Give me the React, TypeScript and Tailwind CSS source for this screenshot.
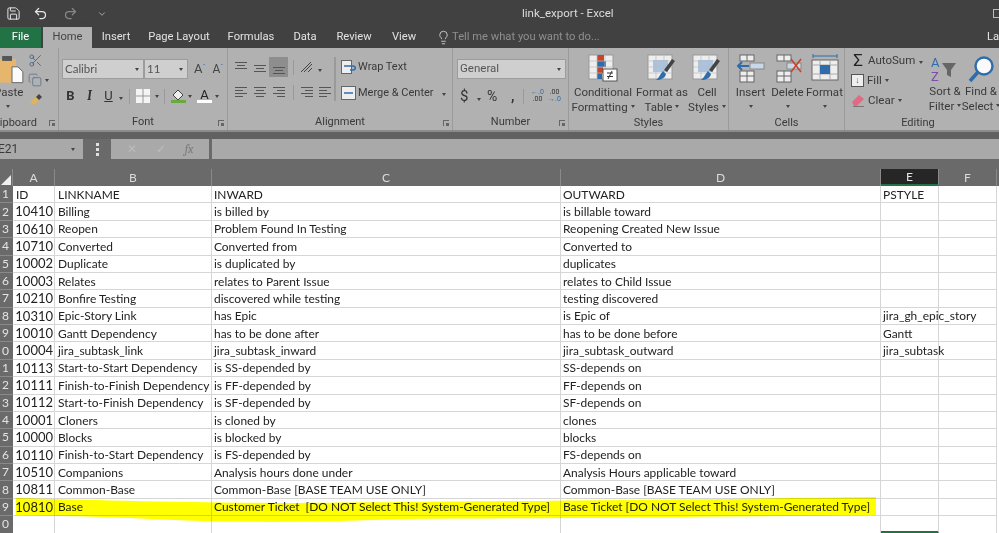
import type { ReactNode } from 'react';
import {
  ChevronDown,
  Copy,
  Lightbulb,
  Save,
  Scissors,
  Undo2,
  Redo2,
} from 'lucide-react';

const rows: [string, string, string, string, string][] = [
  ['10410', 'Billing', 'is billed by', 'is billable toward', ''],
  ['10610', 'Reopen', 'Problem Found In Testing', 'Reopening Created New Issue', ''],
  ['10710', 'Converted', 'Converted from', 'Converted to', ''],
  ['10002', 'Duplicate', 'is duplicated by', 'duplicates', ''],
  ['10003', 'Relates', 'relates to Parent Issue', 'relates to Child Issue', ''],
  ['10210', 'Bonfire Testing', 'discovered while testing', 'testing discovered', ''],
  ['10310', 'Epic-Story Link', 'has Epic', 'is Epic of', 'jira_gh_epic_story'],
  ['10010', 'Gantt Dependency', 'has to be done after', 'has to be done before', 'Gantt'],
  ['10004', 'jira_subtask_link', 'jira_subtask_inward', 'jira_subtask_outward', 'jira_subtask'],
  ['10113', 'Start-to-Start Dependency', 'is SS-depended by', 'SS-depends on', ''],
  ['10111', 'Finish-to-Finish Dependency', 'is FF-depended by', 'FF-depends on', ''],
  ['10112', 'Start-to-Finish Dependency', 'is SF-depended by', 'SF-depends on', ''],
  ['10001', 'Cloners', 'is cloned by', 'clones', ''],
  ['10000', 'Blocks', 'is blocked by', 'blocks', ''],
  ['10110', 'Finish-to-Start Dependency', 'is FS-depended by', 'FS-depends on', ''],
  ['10510', 'Companions', 'Analysis hours done under', 'Analysis Hours applicable toward', ''],
  ['10811', 'Common-Base', 'Common-Base [BASE TEAM USE ONLY]', 'Common-Base [BASE TEAM USE ONLY]', ''],
  ['10810', 'Base', 'Customer Ticket  [DO NOT Select This! System-Generated Type]', 'Base Ticket [DO NOT Select This! System-Generated Type]', ''],
];

const tabs = [
  { label: 'Insert', w: 'w-[48px]' },
  { label: 'Page Layout', w: 'w-[78px]' },
  { label: 'Formulas', w: 'w-[66px]' },
  { label: 'Data', w: 'w-[42px]' },
  { label: 'Review', w: 'w-[56px]' },
  { label: 'View', w: 'w-[44px]' },
];

const Caret = () => (
  <span className="inline-block w-0 h-0 border-x-[2.5px] border-x-transparent border-t-[3px] border-t-[#444]" />
);

const Group = ({
  w,
  label,
  labelClass = '',
  launcher = false,
  children,
}: {
  w: string;
  label: string;
  labelClass?: string;
  launcher?: boolean;
  children: ReactNode;
}) => (
  <div className={`${w} relative shrink-0 h-full flex flex-col border-r border-[#9a9a9a] overflow-hidden`}>
    <div className="h-[65px] flex">{children}</div>
    <div className={`flex-1 flex items-center justify-center text-[11px] pt-[2px] text-[#3a3a3a] ${labelClass}`}>{label}</div>
    {launcher && (
      <span className="absolute right-[3px] bottom-[4px] w-[6px] h-[6px] border-l border-t border-[#666]">
        <span className="absolute right-0 bottom-0 w-[3px] h-[3px] bg-[#666]" />
      </span>
    )}
  </div>
);

const Lines = ({ kind }: { kind: 'top' | 'mid' | 'bottom' | 'left' | 'center' | 'right' }) => {
  const ys = kind === 'top' ? [3, 6, 9] : kind === 'mid' ? [6, 9, 12] : kind === 'bottom' ? [8, 11, 14] : [3, 6, 9, 12];
  const x = (i: number) => {
    const short = i % 2 === 1;
    if (kind === 'left') return [2, short ? 10 : 14];
    if (kind === 'right') return [short ? 6 : 2, 14];
    return short ? [4, 12] : [2, 14];
  };
  return (
    <svg width="16" height="16" viewBox="0 0 16 16" stroke="#555" strokeWidth="1">
      {ys.map((y, i) => (
        <line key={y} x1={x(i)[0]} x2={x(i)[1]} y1={y + 0.5} y2={y + 0.5} />
      ))}
    </svg>
  );
};

const TableIcon = ({ accent }: { accent: 'insert' | 'delete' | 'format' }) => (
  <svg width="32" height="30" viewBox="0 0 32 30">
    {accent === 'format' ? (
      <>
        <path d="M4 2h24M4 0v4M28 0v4" stroke="#2f6cab" strokeWidth="1" fill="none" />
        <rect x="3" y="6" width="26" height="20" fill="#eee" stroke="#666" />
        <path d="M3 11h26M3 20h26M11 6v20M21 6v20" stroke="#aaa" />
        <rect x="11" y="11" width="10" height="9" fill="#2f6cab" />
      </>
    ) : (
      <>
        <rect x="5" y="1" width="14" height="6" fill="#eee" stroke="#666" />
        <rect x="5" y="17" width="14" height="11" fill="#eee" stroke="#666" />
        <path d="M12 1v6M12 17v11M5 22h14" stroke="#666" />
        <rect x="15" y="9" width="14" height="6" fill="#c9d8e8" stroke="#888" />
        {accent === 'insert' ? (
          <path d="M14 12H3M7 8l-4 4 4 4" stroke="#2f6cab" strokeWidth="2" fill="none" />
        ) : (
          <path d="M19 5l10 13M29 5L19 18" stroke="#c8452a" strokeWidth="1.6" fill="none" />
        )}
      </>
    )}
  </svg>
);

const BigButton = ({ w, icon, one, two }: { w: string; icon: ReactNode; one: string; two?: string }) => (
  <div className={`${w} shrink-0 flex flex-col items-center pt-[6px] text-[11.5px] leading-[14.5px] text-[#3a3a3a]`}>
    <div className="h-[30px] flex items-center justify-center">{icon}</div>
    <span className="mt-[1px] whitespace-nowrap">{one}</span>
    {two ? (
      <span className="whitespace-nowrap flex items-center gap-[3px]">
        {two} <Caret />
      </span>
    ) : (
      <span className="h-[14px] flex items-center">
        <Caret />
      </span>
    )}
  </div>
);

const StylesIcon = ({ brush }: { brush: boolean }) => (
  <svg width="30" height="30" viewBox="0 0 30 30">
    <rect x="1" y="1" width="24" height="24" fill="#eee" stroke="#999" />
    {brush ? (
      <rect x="6" y="6" width="15" height="12" fill="#a9c3e0" />
    ) : (
      <>
        <rect x="9" y="1" width="7" height="6" fill="#c8452a" />
        <rect x="9" y="7" width="9" height="6" fill="#2f6cab" />
        <rect x="9" y="13" width="6" height="6" fill="#c8452a" />
        <rect x="9" y="19" width="5" height="6" fill="#2f6cab" />
      </>
    )}
    <path d="M1 7h24M1 13h24M1 19h24M9 1v24M17 1v24" stroke="#bbb" strokeWidth="0.7" />
    {brush ? (
      <>
        <path d="M28 7l-8 11-3-2 8-11z" fill="#444" />
        <path d="M16 17l3 3c-1 4-5 6-10 6 3-2 4-6 7-9z" fill="#2f6cab" />
      </>
    ) : (
      <>
        <rect x="15" y="15" width="14" height="12" fill="#fff" stroke="#555" />
        <path d="M19 19h6M19 22.5h6M24 17l-4 8" stroke="#333" fill="none" />
      </>
    )}
  </svg>
);

const Ribbon = () => (
  <div className="h-[82px] bg-[#b1b1b1] flex">
    <Group w="w-[59px]" label="lipboard" labelClass="pr-[24px]" launcher>
      <div className="w-[26px] flex flex-col items-start text-[11.5px] text-[#3a3a3a] pt-[6px]">
        <svg width="24" height="30" viewBox="0 0 24 30" className="block">
          <rect x="-4" y="5" width="20" height="24" fill="#e5b66b" />
          <rect x="2" y="2" width="10" height="5" fill="#555" />
          <path d="M12 13h6l5 5v11H12z" fill="#fafafa" stroke="#666" />
        </svg>
        <span className="mt-[1px] -ml-[6px] leading-[14.5px]">Paste</span>
        <span className="h-[14px] flex items-center ml-[6px]"><Caret /></span>
      </div>
      <div className="flex-1 flex flex-col items-start gap-[5px] pt-[5px] pl-[2px]">
        <Scissors size={15} strokeWidth={1.3} color="#3d5f86" />
        <span className="flex items-center gap-[3px]">
          <Copy size={14} strokeWidth={1.2} color="#4a6a8a" />
          <Caret />
        </span>
        <svg width="15" height="15" viewBox="0 0 15 15">
          <path d="M2 10l6-5 3 3-5 5z" fill="#e2b458" />
          <path d="M8 5l3-3 3 3-3 3z" fill="#444" />
        </svg>
      </div>
    </Group>

    <Group w="w-[169px]" label="Font" launcher>
      <div className="pl-[3px] pt-[11px] flex flex-col gap-[7px] w-full">
        <div className="flex items-center h-[20px]">
          <div className="w-[82px] h-[20px] bg-[#cfcfcf] border border-[#9c9c9c] flex items-center justify-between px-[2px] pr-[4px] text-[11.5px] text-[#555]" style={{ fontFamily: 'Lato, sans-serif' }}>
            Calibri <Caret />
          </div>
          <div className="w-[44px] h-[20px] bg-[#cfcfcf] border border-[#9c9c9c] flex items-center justify-between px-[2px] pr-[4px] text-[11.5px] text-[#555]" style={{ fontFamily: 'Lato, sans-serif' }}>
            11 <Caret />
          </div>
          <span className="ml-[3px] w-[18px] text-[13px] text-[#444] text-center">
            A<sup className="text-[7px] text-[#2f6cab]">ˆ</sup>
          </span>
          <span className="w-[18px] text-[12px] text-[#444] text-center">
            A<sup className="text-[7px] text-[#2f6cab]">ˇ</sup>
          </span>
        </div>
        <div className="flex items-center h-[20px] text-[#333] text-[13px]">
          <span className="w-[19px] ml-[-1px] text-center font-bold">B</span>
          <span className="w-[19px] text-center italic font-serif font-bold">I</span>
          <span className="w-[19px] text-center underline">U</span>
          <span className="ml-[1px]"><Caret /></span>
          <span className="w-px h-[15px] bg-[#999] mx-[6px]" />
          <svg width="14" height="14" viewBox="0 0 14 14" className="mr-[5px]">
            <rect width="14" height="14" fill="#f4f4f4" />
            <path d="M7 0v14M0 7h14" stroke="#999" />
          </svg>
          <Caret />
          <span className="w-px h-[15px] bg-[#999] mx-[5px]" />
          <span className="w-[16px] flex flex-col items-center mr-[2px]">
            <svg width="14" height="11" viewBox="0 0 14 11">
              <path d="M2 6l5-5 5 5-5 5z" fill="#eee" stroke="#444" />
            </svg>
            <span className="w-[15px] h-[3px] bg-[#6aa93c]" />
          </span>
          <Caret />
          <span className="w-[15px] flex flex-col items-center ml-[5px] mr-[3px] leading-[11px] text-[13px] text-[#222]">
            A
            <span className="w-[15px] h-[3px] bg-white" />
          </span>
          <Caret />
        </div>
      </div>
    </Group>

    <Group w="w-[225px]" label="Alignment" launcher>
      <div className="pl-[3px] pt-[9px] flex w-full">
        <div className="flex flex-col gap-[5px] w-[103px]">
          <div className="flex items-center h-[20px]">
            <span className="w-[19px] flex justify-center"><Lines kind="top" /></span>
            <span className="w-[19px] flex justify-center"><Lines kind="mid" /></span>
            <span className="w-[19px] h-[20px] bg-[#8e8e8e] flex justify-center items-center"><Lines kind="bottom" /></span>
            <span className="w-px h-[15px] bg-[#999] mx-[5px]" />
            <svg width="16" height="14" viewBox="0 0 16 14" stroke="#444" fill="none"><path d="M2 12L12 2M5 12l8-8M9 12l4-4" /></svg>
            <span className="ml-[3px]"><Caret /></span>
          </div>
          <div className="flex items-center h-[20px]">
            <span className="w-[19px] flex justify-center"><Lines kind="left" /></span>
            <span className="w-[19px] flex justify-center"><Lines kind="center" /></span>
            <span className="w-[19px] flex justify-center"><Lines kind="right" /></span>
            <span className="w-px h-[15px] bg-[#999] mx-[5px]" />
            <Lines kind="right" />
            <span className="w-[2px]" />
            <Lines kind="left" />
          </div>
        </div>
        <span className="w-[2px] h-[44px] bg-[#9a9a9a] mr-[5px]" />
        <div className="flex flex-col gap-[6px] text-[11px] text-[#3a3a3a]">
          <div className="flex items-center h-[20px] gap-[2px] whitespace-nowrap">
            <svg width="15" height="14" viewBox="0 0 15 14"><rect x="0.5" y="0.5" width="10" height="13" fill="#eee" stroke="#666" /><path d="M3 6h9c3 0 3 4 0 4H9" stroke="#2f6cab" fill="none" strokeWidth="1.5" /></svg>
            Wrap Text
          </div>
          <div className="flex items-center h-[20px] gap-[2px] whitespace-nowrap">
            <svg width="15" height="14" viewBox="0 0 15 14"><rect x="0.5" y="0.5" width="14" height="13" fill="#eee" stroke="#666" /><path d="M3 7h9" stroke="#2f6cab" strokeWidth="1.5" /></svg>
            Merge &amp; Center
            <span className="ml-[6px]"><Caret /></span>
          </div>
        </div>
      </div>
    </Group>

    <Group w="w-[116px]" label="Number" launcher>
      <div className="pl-[4px] pt-[11px] flex flex-col gap-[7px] w-full">
        <div className="w-[109px] h-[20px] bg-[#cfcfcf] border border-[#9c9c9c] flex items-center justify-between px-[2px] pr-[4px] text-[11.5px] text-[#555]">
          General <Caret />
        </div>
        <div className="flex items-center h-[20px] pl-[3px] text-[#333]">
          <span className="text-[15px] w-[14px]">$</span>
          <span className="ml-[3px]"><Caret /></span>
          <span className="text-[14px] ml-[6px] w-[19px]">%</span>
          <span className="text-[14px] font-bold ml-[5px] w-[12px]">,</span>
          <span className="w-px h-[15px] bg-[#999] mr-[5px]" />
          <span className="text-[7px] leading-[7px] w-[17px] text-center text-[#2f6cab]">←.0<br /><span className="text-[#333]">.00</span></span>
          <span className="text-[7px] leading-[7px] w-[17px] text-center text-[#333]">.00<br /><span className="text-[#2f6cab]">→.0</span></span>
        </div>
      </div>
    </Group>

    <Group w="w-[160px]" label="Styles">
      <span className="w-[3px]" />
      <BigButton w="w-[62px]" icon={<StylesIcon brush={false} />} one="Conditional" two="Formatting" />
      <BigButton w="w-[56px]" icon={<StylesIcon brush />} one="Format as" two="Table" />
      <BigButton w="w-[34px]" icon={<StylesIcon brush />} one="Cell" two="Styles" />
    </Group>

    <Group w="w-[116px]" label="Cells">
      <span className="w-[3px]" />
      <BigButton w="w-[37px]" icon={<TableIcon accent="insert" />} one="Insert" />
      <BigButton w="w-[37px]" icon={<TableIcon accent="delete" />} one="Delete" />
      <BigButton w="w-[37px]" icon={<TableIcon accent="format" />} one="Format" />
    </Group>

    <div className="flex-1 h-full flex flex-col overflow-hidden">
      <div className="h-[65px] flex">
        <div className="w-[82px] pl-[6px] pt-[3px] flex flex-col gap-[1px] text-[11.5px] text-[#3a3a3a]">
          <div className="flex items-center gap-[3px] h-[19px] whitespace-nowrap">
            <span className="w-[14px] text-[17px] leading-none text-center text-[#222]">Σ</span>
            AutoSum <span className="ml-[1px]"><Caret /></span>
          </div>
          <div className="flex items-center gap-[3px] h-[19px] whitespace-nowrap">
            <span className="w-[13px] h-[13px] bg-[#eee] border border-[#555] text-[#2f6cab] flex items-center justify-center text-[9px] font-bold">↓</span>
            Fill <Caret />
          </div>
          <div className="flex items-center gap-[3px] h-[19px] whitespace-nowrap">
            <svg width="14" height="13" viewBox="0 0 14 13"><path d="M1 8l7-7 5 4-7 7H3z" fill="#df6c85" /><path d="M2 12.5h11" stroke="#777" /></svg>
            Clear <Caret />
          </div>
        </div>
        <BigButton
          w="w-[36px]"
          icon={
            <svg width="30" height="28" viewBox="0 0 30 28">
              <text x="1" y="12" fontSize="13" fill="#2f6cab">A</text>
              <text x="1" y="26" fontSize="13" fill="#7d4fa8">Z</text>
              <path d="M12 8h14l-5 7v7l-4-2v-5z" fill="#666" />
            </svg>
          }
          one="Sort &"
          two="Filter"
        />
        <BigButton
          w="w-[36px]"
          icon={
            <svg width="30" height="28" viewBox="0 0 30 28" fill="none">
              <circle cx="18" cy="11" r="8.5" fill="#fafafa" stroke="#2f6cab" strokeWidth="2.4" />
              <path d="M12 17L4 26" stroke="#2f6cab" strokeWidth="3.5" />
            </svg>
          }
          one="Find &"
          two="Select"
        />
      </div>
      <div className="flex-1 flex items-center justify-center pt-[2px] pr-[8px] text-[11px] text-[#3a3a3a]">Editing</div>
    </div>
  </div>
);

const cell = 'border-r border-b border-[#d6d6d6] flex items-center pt-[1px] whitespace-pre overflow-visible';

const Sheet = () => (
  <div
    className="relative grid grid-cols-[13px_42px_157px_349px_320px_58px_58px_2px] grid-rows-[17px_repeat(20,17.39px)] text-[11.95px] text-[#222] bg-white"
    style={{ fontFamily: 'Lato, sans-serif' }}
  >
    <div className="bg-[#6a6a6a] flex items-end justify-end border-r border-[#8a8a8a] pr-[1px] pb-[1px]">
      <span className="w-0 h-0 border-l-[10px] border-l-transparent border-b-[10px] border-b-[#efefef]" />
    </div>
    {['A', 'B', 'C', 'D', 'E', 'F'].map((c) => (
      <div
        key={c}
        className={`flex items-center justify-center text-[12px] border-r border-[#8a8a8a] ${
          c === 'E' ? 'bg-[#262626] text-[#e6e6e6] border-b-2 border-b-[#217346]' : 'bg-[#6a6a6a] text-[#dcdcdc]'
        }`}
      >
        {c}
      </div>
    ))}
    <div className="bg-[#6a6a6a]" />

    {[['ID', 'LINKNAME', 'INWARD', 'OUTWARD', 'PSTYLE'] as string[], ...rows, ['', '', '', '', '']].map((r, i) => (
      <div key={i} className="contents">
        <div className="bg-[#6a6a6a] text-[#e4e4e4] text-[12px] flex items-center justify-start pl-[2px] border-b border-[#8a8a8a]">
          {String(i + 1).slice(-1)}
        </div>
        <div className={`${cell} ${i === 0 ? 'pl-[3px]' : 'justify-end pr-[1px] text-[13px]'}`}>{r[0]}</div>
        <div className={`${cell} pl-[3px]`}>{r[1]}</div>
        <div className={`${cell} pl-[2px]`}>{r[2]}</div>
        <div className={`${cell} pl-[2px]`}>{r[3]}</div>
        <div className={`${cell} pl-[2px] ${i === 19 ? 'border-b-[3px] border-b-[#217346]' : ''}`}>{r[4]}</div>
        <div className={cell} />
        <div />
      </div>
    ))}

    {/* marker stroke drawn over the last data row */}
    <svg className="absolute left-0 top-[328px] mix-blend-multiply pointer-events-none" width="999" height="30" viewBox="0 0 999 30">
      <path d="M16 1C90 3 200 6 300 6 400 5 650 3 876 0L876 18C700 20 560 21 400 22 300 26 220 26 130 21 80 19 40 19 16 18Z" fill="#ffff00" />
    </svg>
  </div>
);

export default function App() {
  return (
    <div className="w-[999px] h-[533px] overflow-hidden bg-white" style={{ fontFamily: 'Roboto, sans-serif' }}>
      <div className="h-[27px] bg-[#414141] flex items-center text-[#e6e6e6] relative">
        <Save size={15} strokeWidth={1.6} className="ml-[6px]" />
        <Undo2 size={15} strokeWidth={2} className="ml-[12px]" />
        <span className="ml-[3px]"><Caret /></span>
        <Redo2 size={15} strokeWidth={2} className="ml-[8px] text-[#888]" />
        <span className="ml-[3px]"><Caret /></span>
        <ChevronDown size={10} className="ml-[12px] text-[#bbb]" />
        <span className="flex-1 pl-[415px] text-[11.5px] text-[#dcdcdc]">link_export - Excel</span>
        <span className="w-[6px] h-[9px] border border-[#bbb] border-r-0" />
      </div>

      <div className="h-[21px] bg-[#414141] flex items-stretch text-[11.2px] text-[#e2e2e2]">
        <div className="w-[41px] bg-[#217346] flex items-center justify-center text-white">File</div>
        <div className="w-[49px] ml-[2px] bg-[#b1b1b1] text-[#444] flex items-center justify-center">Home</div>
        {tabs.map((t) => (
          <div key={t.label} className={`${t.w} flex items-center justify-center whitespace-nowrap`}>
            {t.label}
          </div>
        ))}
        <div className="ml-[10px] flex items-center gap-[1px] text-[#8f8f8f] whitespace-nowrap">
          <Lightbulb size={15} strokeWidth={1.3} className="text-[#ddd]" />
          Tell me what you want to do...
        </div>
        <div className="ml-auto flex items-center pr-0">La</div>
      </div>

      <Ribbon />

      <div className="h-[9px] bg-[#616161] border-t-2 border-[#8c8c8c]" />

      <div className="h-[30px] bg-[#6a6a6a] flex items-start text-[12px] text-[#333]">
        <div className="w-[83px] h-[20px] bg-[#a9a9a9] flex items-center justify-between pr-[8px] text-[#3a3a3a] overflow-hidden">
          <span className="-ml-[2px]">E21</span>
          <Caret />
        </div>
        <div className="w-[28px] h-[20px] flex flex-col items-center justify-center gap-[2px]">
          <span className="w-[3px] h-[3px] bg-[#e0e0e0]" />
          <span className="w-[3px] h-[3px] bg-[#e0e0e0]" />
          <span className="w-[3px] h-[3px] bg-[#e0e0e0]" />
        </div>
        <div className="w-[98px] h-[20px] bg-[#a9a9a9] flex items-center justify-around px-[6px] text-[#bcbcbc]">
          <span>✕</span>
          <span>✓</span>
          <span className="italic font-serif text-[#7a7a7a]">fx</span>
        </div>
        <div className="w-[3px]" />
        <div className="flex-1 h-[20px] bg-[#a9a9a9]" />
      </div>

      <Sheet />
    </div>
  );
}
